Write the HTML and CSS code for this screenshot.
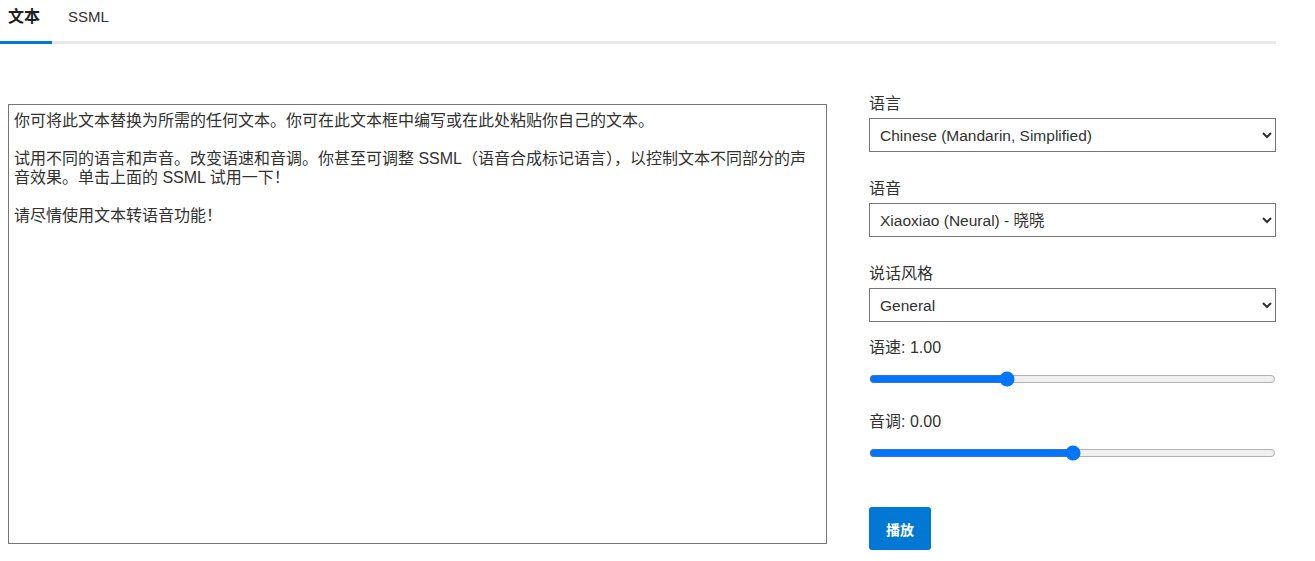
FILE: index.html
```html
<!DOCTYPE html>
<html lang="zh-CN">
<head>
    <meta charset="UTF-8">
    <meta name="viewport" content="width=device-width, initial-scale=1.0">
    <title>文本转语音</title>
    <link rel="stylesheet" href="styles.css">
</head>
<body>
    <div class="page">
        <div class="tabs">
            <button class="tab active">文本</button>
            <button class="tab">SSML</button>
        </div>

        <div class="main">
            <div class="editor">
                <textarea class="text-input">你可将此文本替换为所需的任何文本。你可在此文本框中编写或在此处粘贴你自己的文本。

试用不同的语言和声音。改变语速和音调。你甚至可调整 SSML（语音合成标记语言），以控制文本不同部分的声音效果。单击上面的 SSML 试用一下！

请尽情使用文本转语音功能！</textarea>
            </div>

            <div class="options">
                <div class="field">
                    <label class="label">语言</label>
                    <select class="select">
                        <option>Chinese (Mandarin, Simplified)</option>
                    </select>
                </div>
                <div class="field">
                    <label class="label">语音</label>
                    <select class="select">
                        <option>Xiaoxiao (Neural) - 晓晓</option>
                    </select>
                </div>
                <div class="field field-style">
                    <label class="label">说话风格</label>
                    <select class="select">
                        <option>General</option>
                    </select>
                </div>
                <div class="slider-field">
                    <label class="label">语速: <span id="rate-value">1.00</span></label>
                    <input id="rate" class="slider" type="range" min="0" max="3" step="0.01" value="1">
                </div>
                <div class="slider-field">
                    <label class="label">音调: <span id="pitch-value">0.00</span></label>
                    <input id="pitch" class="slider" type="range" min="-2" max="2" step="0.01" value="0">
                </div>
                <button class="play">播放</button>
            </div>
        </div>
    </div>

    <script>
        document.getElementById('rate').addEventListener('input', function () {
            document.getElementById('rate-value').textContent = parseFloat(this.value).toFixed(2);
        });
        document.getElementById('pitch').addEventListener('input', function () {
            document.getElementById('pitch-value').textContent = parseFloat(this.value).toFixed(2);
        });
    </script>
</body>
</html>
```

FILE: styles.css
```css
body {
    margin: 0;
    font-family: "Liberation Sans", "Noto Sans CJK SC", sans-serif;
    color: #323130;
    background: #fff;
}
.page {
    width: 1276px;
}
.tabs {
    display: flex;
    gap: 8px;
    height: 41px;
    border-bottom: 3px solid #e8e8e8;
}
.tab {
    height: 44px;
    padding: 0 12px 0 8px;
    margin: 0;
    border: none;
    border-bottom: 3px solid transparent;
    background: none;
    font-family: inherit;
    font-size: 15px;
    color: #323130;
    line-height: 34px;
    align-self: flex-start;
    display: flex;
    align-items: flex-start;
    cursor: pointer;
}
.tab.active {
    border-bottom-color: #0078d4;
    font-weight: bold;
    color: #201f1e;
    font-size: 16px;
}
.main {
    display: flex;
    gap: 42px;
    padding: 49px 0 0 8px;
}
.editor {
    padding-top: 11px;
}
.text-input {
    display: block;
    box-sizing: border-box;
    width: 819px;
    height: 440px;
    margin: 0;
    padding: 6px 5px;
    border: 1px solid #767676;
    border-radius: 0;
    resize: none;
    font-family: "Liberation Sans", "Noto Sans CJK SC", sans-serif;
    font-size: 16px;
    line-height: 19px;
    color: #323130;
}
.options {
    flex: 1;
    display: flex;
    flex-direction: column;
}
.field {
    display: flex;
    flex-direction: column;
    gap: 4px;
    margin-bottom: 26px;
}
.field-style {
    margin-bottom: 15px;
}
.label {
    font-size: 16px;
    line-height: 21px;
}
.select {
    height: 34px;
    margin: 0;
    padding: 0 6px;
    border: 1px solid #767676;
    border-radius: 0;
    background: #fff;
    font-family: "Liberation Sans", "Noto Sans CJK SC", sans-serif;
    font-size: 15.5px;
    color: #323130;
}
.slider-field {
    display: flex;
    flex-direction: column;
    gap: 13px;
    height: 74px;
}
.slider {
    width: 100%;
    margin: 0;
    accent-color: #0075ff;
}
.play {
    align-self: flex-start;
    margin-top: 22px;
    width: 62px;
    height: 43px;
    border: none;
    border-radius: 3px;
    background: #0078d4;
    color: #fff;
    font-family: "Liberation Sans", "Noto Sans CJK SC", sans-serif;
    font-size: 14px;
    font-weight: bold;
    cursor: pointer;
}
```
